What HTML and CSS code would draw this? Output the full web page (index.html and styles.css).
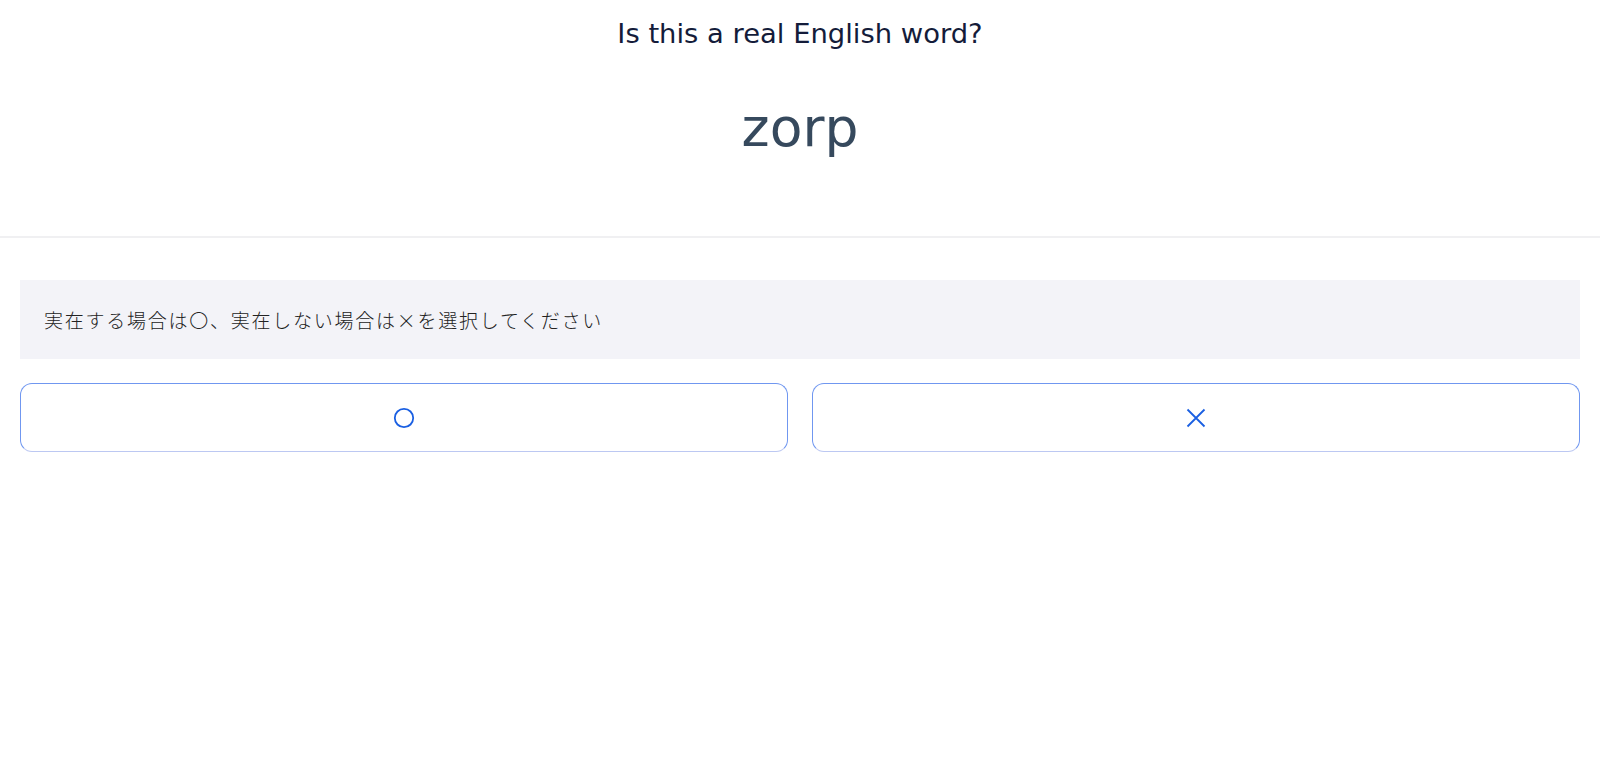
FILE: index.html
```html
<!DOCTYPE html>
<html lang="ja">
<head>
<meta charset="utf-8">
<title>Word check</title>
<link rel="stylesheet" href="styles.css">
</head>
<body>
<header class="header">
  <h1 class="prompt">Is this a real English word?</h1>
  <p class="word">zorp</p>
</header>
<main class="main">
  <div class="instruction">実在する場合は〇、実在しない場合は×を選択してください</div>
  <div class="choices">
    <button class="choice" type="button" aria-label="〇">
      <svg class="icon" width="22" height="22" viewBox="0 0 22 22"><circle cx="11" cy="11" r="9.2" fill="none" stroke="currentColor" stroke-width="1.8"/></svg>
    </button>
    <button class="choice" type="button" aria-label="×">
      <svg class="icon" width="20" height="20" viewBox="0 0 20 20"><path d="M1.5 1.5 L18.5 18.5 M18.5 1.5 L1.5 18.5" fill="none" stroke="currentColor" stroke-width="1.8"/></svg>
    </button>
  </div>
</main>
</body>
</html>
```

FILE: styles.css
```css
html, body {
  margin: 0;
  padding: 0;
  background: #ffffff;
}

body {
  font-family: "DejaVu Sans", Verdana, sans-serif;
}

.header {
  padding-top: 18px;
  padding-bottom: 77px;
  border-bottom: 2px solid #f0f0f2;
  text-align: center;
}

.prompt {
  margin: 0;
  font-size: 27.4px;
  font-weight: 400;
  color: #141c3a;
}

.word {
  margin: 47px 0 0;
  font-size: 53.5px;
  font-weight: 400;
  color: #36495d;
}

.main {
  padding: 42px 20px;
}

.instruction {
  height: 79px;
  display: flex;
  align-items: center;
  padding: 0 24px;
  background: #f3f3f8;
  color: #222222;
  font-family: "Noto Sans CJK JP", sans-serif;
  font-size: 19px;
  letter-spacing: 1.75px;
  font-weight: 300;
}

.choices {
  margin-top: 24px;
  display: grid;
  grid-template-columns: 1fr 1fr;
  gap: 24px;
}

.choice {
  height: 69px;
  display: flex;
  align-items: center;
  justify-content: center;
  background: #ffffff;
  border: 1px solid #7097f0;
  border-bottom-color: #bcc8f2;
  border-radius: 12px;
  color: #1a5fe2;
  padding: 0;
  cursor: pointer;
}

.icon {
  display: block;
}
```
